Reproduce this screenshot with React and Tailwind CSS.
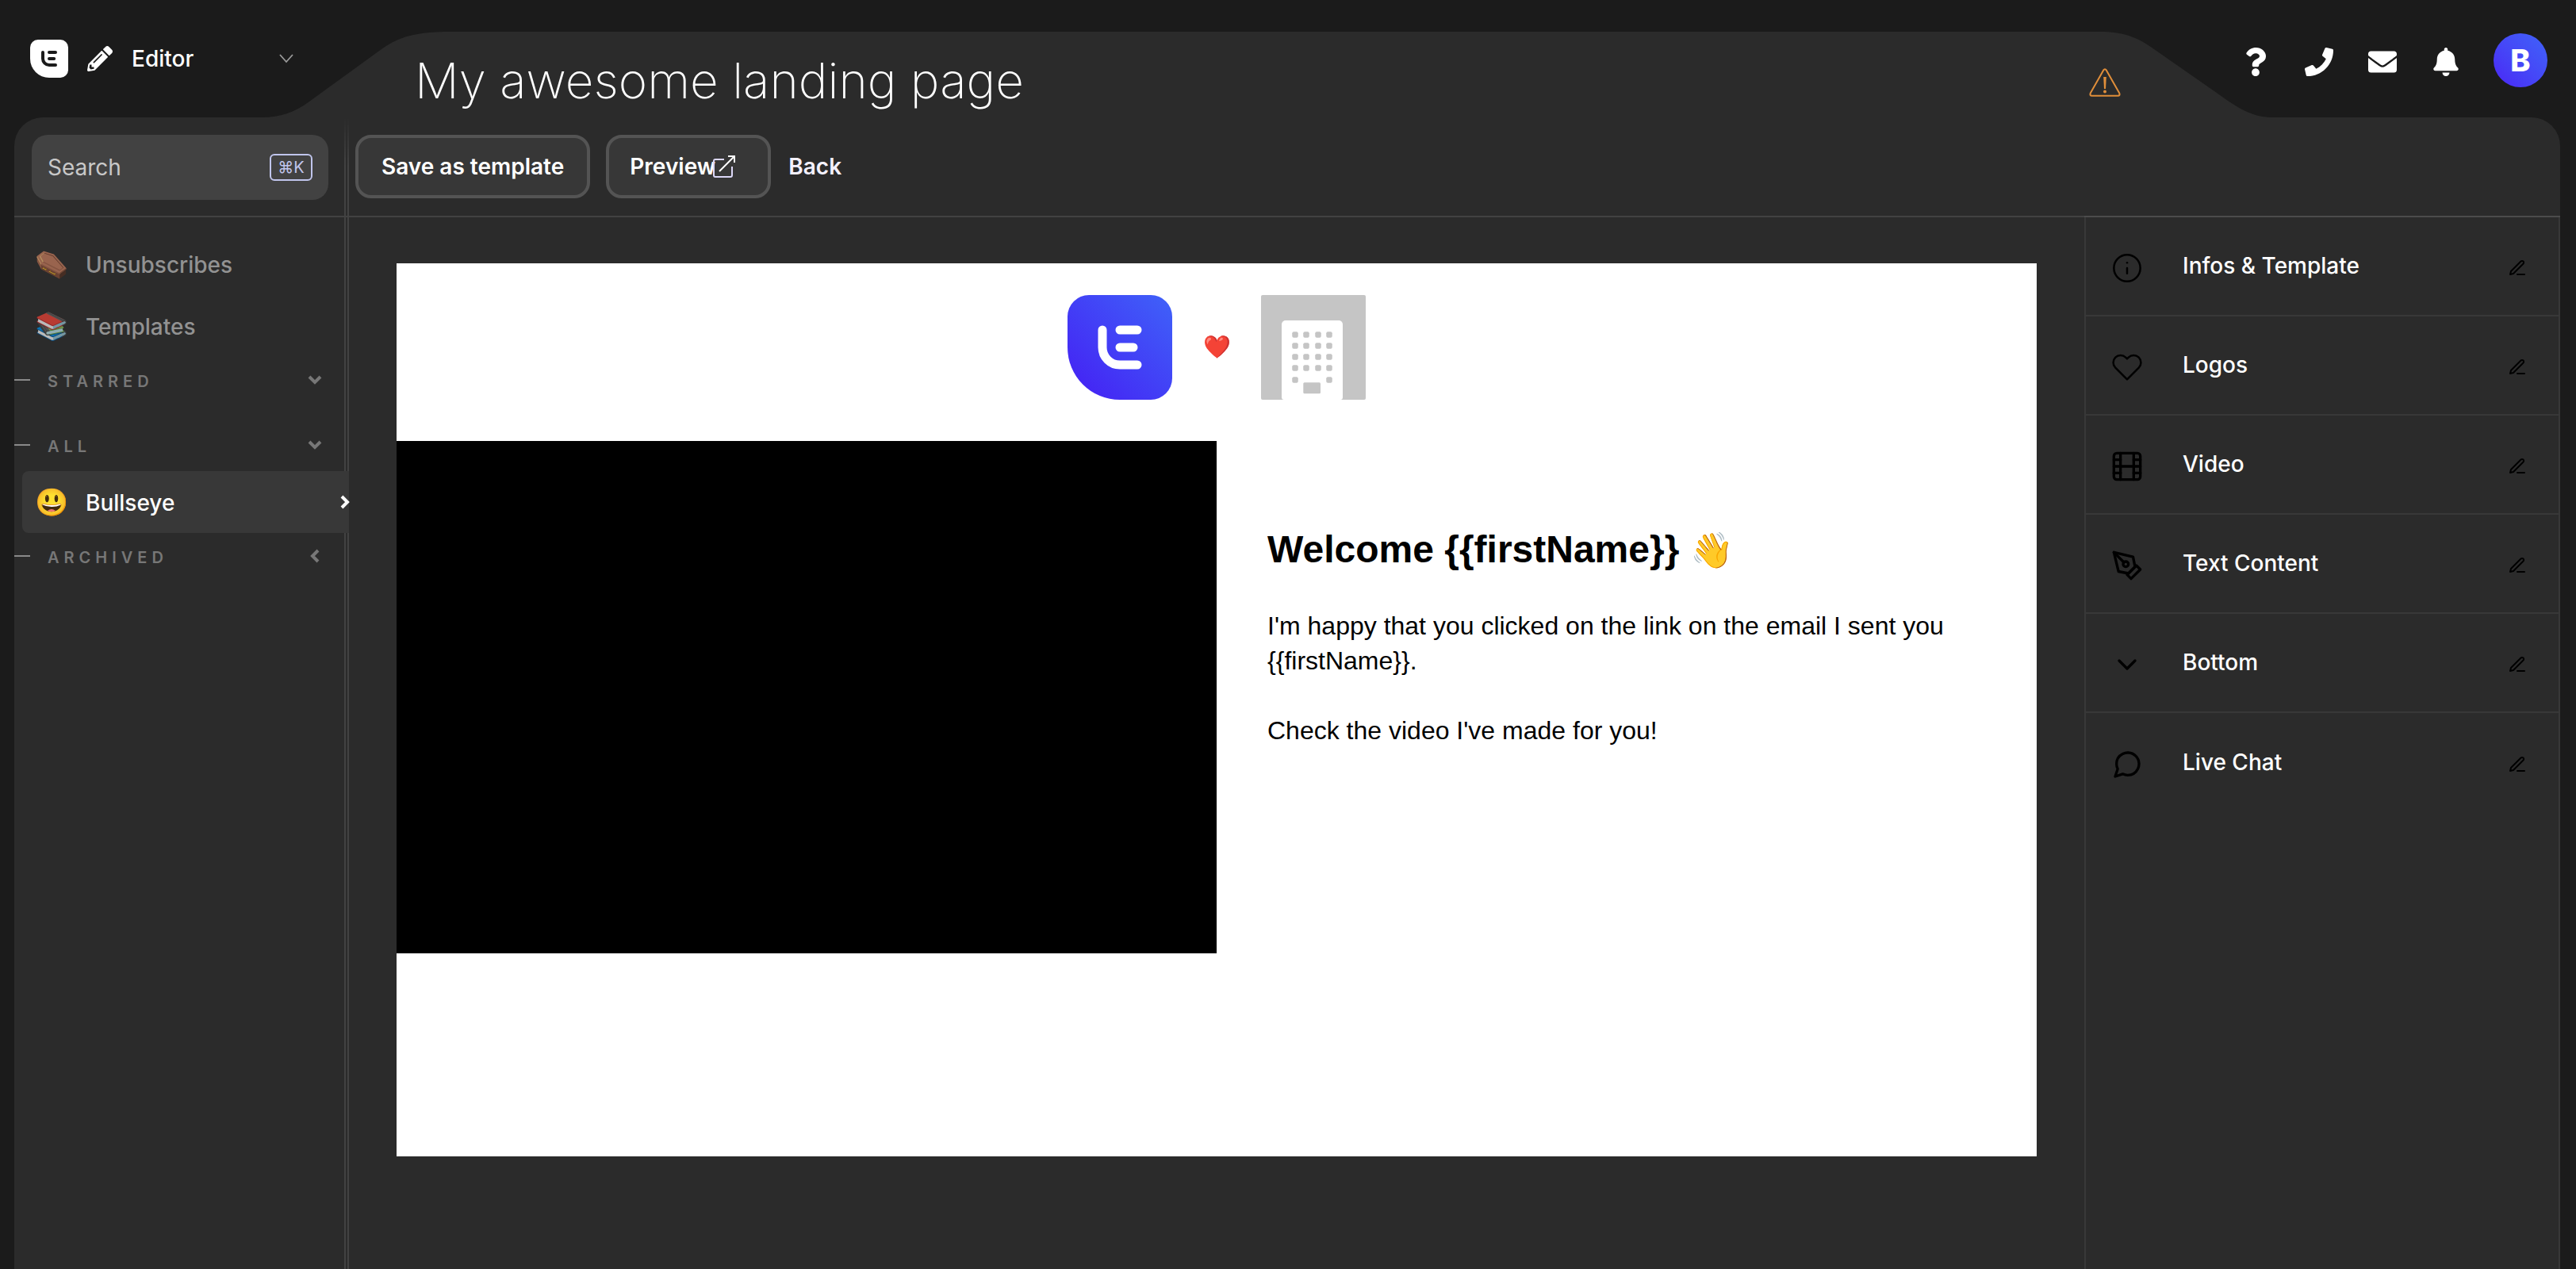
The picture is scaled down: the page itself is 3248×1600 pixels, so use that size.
import React from 'react';
import { FaQuestion, FaPhone, FaEnvelope, FaBell, FaPencilAlt } from 'react-icons/fa';
import { FiInfo, FiHeart, FiFilm, FiPenTool, FiChevronDown, FiMessageCircle, FiEdit3 } from 'react-icons/fi';

function LogoMark({ className, shape, glyph }) {
  return (
    <svg viewBox="0 0 132 132" className={className} aria-hidden="true">
      <defs>
        <linearGradient id="brand" x1="0" y1="1" x2="1" y2="0">
          <stop offset="0.15" stopColor="#4428f4" />
          <stop offset="1" stopColor="#3f62f9" />
        </linearGradient>
      </defs>
      <path d="M27 0H105A27 27 0 0 1 132 27V105A27 27 0 0 1 105 132H66A66 66 0 0 1 0 66V27A27 27 0 0 1 27 0Z" fill={shape} />
      <path d="M44 44V66A22 22 0 0 0 66 88H88M66 44H88M66 66H83" fill="none" stroke={glyph} strokeWidth="11" strokeLinecap="round" />
    </svg>
  );
}

function Building() {
  const cols = [43, 57, 72, 86];
  const rows = [50, 64, 78, 92, 107];
  return (
    <svg viewBox="0 0 132 132" className="size-[132px]" aria-hidden="true">
      <rect width="132" height="132" rx="2" fill="#c5c5c5" />
      <path d="M31 32H98A5 5 0 0 1 103 37V129A3 3 0 0 1 100 132H29A3 3 0 0 1 26 129V37A5 5 0 0 1 31 32Z" fill="#fff" />
      {rows.map((y, r) =>
        cols.filter((_, c) => r < 4 || c === 0 || c === 3).map((x) => (
          <rect key={x + '-' + y} x={x - 3.75} y={y - 3.75} width="7.5" height="7.5" rx="2" fill="#c5c5c5" />
        ))
      )}
      <rect x="53.3" y="110.3" width="21.7" height="14" rx="1.5" fill="#c5c5c5" />
    </svg>
  );
}

function Warning() {
  return (
    <svg viewBox="0 0 40 36" className="h-9 w-10" fill="none" stroke="#e08e3a" aria-hidden="true">
      <path d="M18.2 2.4Q20 0 21.8 2.4L38.3 31.6Q39.4 34.6 36.4 34.7H3.6Q0.6 34.6 1.7 31.6Z" strokeWidth="2" strokeLinejoin="round" />
      <path d="M18.2 11H21.8L21 26H19Z" fill="#e08e3a" stroke="none" />
      <circle cx="20" cy="29.4" r="2" fill="#e08e3a" stroke="none" />
    </svg>
  );
}

function External() {
  return (
    <svg viewBox="0 0 30 30" className="size-[30px]" fill="none" stroke="#dcd8f8" strokeWidth="2" aria-hidden="true">
      <path d="M15 6H4Q2 6 2 8V26Q2 28 4 28H23Q25 28 25 26V15" />
      <path d="M9 21L28 2M20 2H28V10" stroke="#fff" />
    </svg>
  );
}

function Chevron({ dir, className }) {
  const d = { down: 'M2 5L9 12L16 5', left: 'M13 2L6 9L13 16', right: 'M5 2L12 9L5 16' }[dir];
  return (
    <svg viewBox="0 0 18 18" className={className} fill="none" stroke="currentColor" strokeWidth="4" aria-hidden="true">
      <path d={d} />
    </svg>
  );
}

const HEADER_ACTIONS = [
  ['Help', FaQuestion],
  ['Calls', FaPhone],
  ['Messages', FaEnvelope],
  ['Notifications', FaBell],
];

function Header() {
  return (
    <header className="flex h-[148px]">
      <button type="button" className="z-10 flex w-[370px] shrink-0 items-center pl-[38px] text-white">
        <LogoMark className="size-12" shape="#fff" glyph="#1b1b1b" />
        <FaPencilAlt className="ml-6 size-8" />
        <span className="ml-6 text-[28px] font-medium">Editor</span>
        <svg viewBox="0 0 18 12" className="ml-auto h-3 w-[18px]" fill="none" stroke="#9a9a9a" strokeWidth="1.8" aria-hidden="true">
          <path d="M1 1L9 10L17 1" />
        </svg>
      </button>
      <svg viewBox="0 0 238 108" className="-ml-[39px] h-[108px] w-[238px] shrink-0 self-end" fill="#2b2b2b" aria-hidden="true">
        <path d="M0 108C22 108 40 102 59 88L150 22C170 7 192 0 238 0V108Z" />
      </svg>
      <div className="mt-10 flex flex-1 items-center justify-between bg-[#2b2b2b]">
        <h1 className="-ml-[46px] pb-3 pt-7 text-[62px] font-extralight leading-[68px] text-white">My awesome landing page</h1>
        <button type="button" aria-label="Warnings" className="z-10 -mr-[26px] mt-5"><Warning /></button>
      </div>
      <svg viewBox="0 0 218 108" className="h-[108px] w-[218px] shrink-0 self-end" fill="#2b2b2b" aria-hidden="true">
        <path d="M0 0C28 0 46 6 68 22L154 82C176 98 194 108 218 108H0Z" />
      </svg>
      <div className="z-10 -ml-[62px] flex shrink-0 items-center pr-9 pt-1 text-white">
        {HEADER_ACTIONS.map(([label, Icon]) => (
          <button key={label} type="button" aria-label={label} className="flex w-20 justify-center pt-1">
            <Icon className="size-9" />
          </button>
        ))}
        <button type="button" className="ml-5 size-[68px] rounded-full bg-linear-to-tr from-[#4a22f5] to-[#3f62f9] text-[38px] font-extrabold">B</button>
      </div>
    </header>
  );
}

function NavItem({ emoji, label, active }) {
  return (
    <a
      href="#"
      className={
        active
          ? 'relative mt-1 -mr-[6px] ml-[10px] flex h-[78px] items-center gap-6 rounded-l-lg bg-[#383838] pl-[18px] text-[28px] font-medium text-white'
          : 'ml-[10px] flex h-[78px] items-center gap-6 pl-[18px] text-[28px] font-medium text-[#929292]'
      }
    >
      <span className={active ? 'flex w-[38px] justify-center text-[34px] leading-none' : 'flex w-[38px] justify-center text-[34px] leading-none opacity-70'}>{emoji}</span>
      <span className="pt-0.5">{label}</span>
      {active && <Chevron dir="right" className="ml-auto -mr-1 size-[18px]" />}
    </a>
  );
}

function NavSection({ label, dir }) {
  return (
    <button type="button" className="flex h-[58px] w-full items-center pr-7 text-[20px] font-semibold text-[#777777]">
      <span className="h-0.5 w-5 bg-[#8a8a8a]" />
      <span className="ml-[22px] pt-1 tracking-[6px]">{label}</span>
      <Chevron dir={dir} className="ml-auto size-[18px]" />
    </button>
  );
}

function Sidebar() {
  return (
    <nav className="w-[422px] shrink-0 border-r-6 border-double border-[#424242] pt-5">
      <NavItem emoji="⚰️" label="Unsubscribes" />
      <NavItem emoji="📚" label="Templates" />
      <NavSection label="STARRED" dir="down" />
      <div className="mt-6">
        <NavSection label="ALL" dir="down" />
      </div>
      <NavItem emoji="😃" label="Bullseye" active />
      <NavSection label="ARCHIVED" dir="left" />
    </nav>
  );
}

function Toolbar() {
  return (
    <div className="flex h-[124px]">
      <div className="w-[416px] shrink-0 pl-[22px] pr-5 pt-[22px]">
        <label className="flex h-[82px] items-center rounded-[20px] bg-[#424242] px-5">
          <input type="text" aria-label="Search" placeholder="Search" className="min-w-0 flex-1 bg-transparent text-[28px] text-white outline-none placeholder:text-[#c8c8c8]" />
          <kbd className="flex h-[34px] w-[54px] items-center justify-center rounded-md border-2 border-[#c0c5ec] font-['Inter',sans-serif] text-[20px] text-[#c0c5ec]">⌘K</kbd>
        </label>
      </div>
      <div className="w-[6px] border-x-2 border-[#424242] [mask-image:linear-gradient(to_bottom,transparent,black_60px)]" />
      <div className="flex items-start pl-2 pt-[22px] text-[28px] font-semibold text-white">
        <button type="button" className="h-20 rounded-[20px] border-4 border-[#545454] bg-[#373737] px-[29px]">Save as template</button>
        <button type="button" className="ml-5 flex h-20 items-center rounded-[20px] border-4 border-[#545454] bg-[#373737] pl-[26px] pr-10">
          Preview
          <span className="-ml-1"><External /></span>
        </button>
        <a href="#" className="ml-[22px] leading-[80px] text-[#f4f1ff]">Back</a>
      </div>
    </div>
  );
}

function Canvas() {
  return (
    <main className="flex-1 px-[60px] pb-[60px] pt-[58px]">
      <article className="bg-white pb-64 pt-10 font-['Liberation_Sans',Arial,sans-serif] text-black">
        <div className="flex items-center justify-center gap-10">
          <LogoMark className="size-[132px]" shape="url(#brand)" glyph="#fff" />
          <span className="flex w-8 justify-center text-[28px] leading-none">❤️</span>
          <Building />
        </div>
        <div className="mt-[52px] grid grid-cols-2">
          <div className="aspect-[16/10] bg-black" />
          <div className="px-16 pt-[107px]">
            <h2 className="text-[48px] font-bold leading-[60px]">
              Welcome {'{{firstName}}'} <span className="text-[44px] leading-none">👋</span>
            </h2>
            <p className="mt-11 text-[32px] leading-[44px]">I'm happy that you clicked on the link on the email I sent you {'{{firstName}}'}.</p>
            <p className="mt-11 text-[32px] leading-[44px]">Check the video I've made for you!</p>
          </div>
        </div>
      </article>
    </main>
  );
}

const PANELS = [
  ['Infos & Template', FiInfo, 1.5],
  ['Logos', FiHeart, 1.5],
  ['Video', FiFilm, 2],
  ['Text Content', FiPenTool, 2],
  ['Bottom', FiChevronDown, 2],
  ['Live Chat', FiMessageCircle, 2],
];

function Inspector() {
  return (
    <aside className="w-[600px] shrink-0 border-x-2 border-[#383838]">
      {PANELS.map(([label, Icon, stroke]) => (
        <button
          key={label}
          type="button"
          className="flex h-[125px] w-full items-center border-b-2 border-[#383838] pl-8 pr-10 text-black last:border-b-0"
        >
          <Icon className="mt-1 size-10" style={{ strokeWidth: stroke }} />
          <span className="ml-[50px] pb-0.5 text-[28px] font-medium text-white">{label}</span>
          <FiEdit3 className="ml-auto mt-1 size-6" />
        </button>
      ))}
    </aside>
  );
}

export default function App() {
  return (
    <div className="flex min-h-screen flex-col bg-[#1b1b1b] font-['Inter',sans-serif]">
      <Header />
      <div className="ml-[18px] mr-5 flex flex-1 flex-col rounded-t-[36px] bg-[#2b2b2b]">
        <Toolbar />
        <div className="flex h-0.5 shrink-0">
          <div className="flex-1 bg-[#424242]" />
          <div className="w-[600px] bg-[#4c4c4c]" />
        </div>
        <div className="flex flex-1">
          <Sidebar />
          <Canvas />
          <Inspector />
        </div>
      </div>
    </div>
  );
}
